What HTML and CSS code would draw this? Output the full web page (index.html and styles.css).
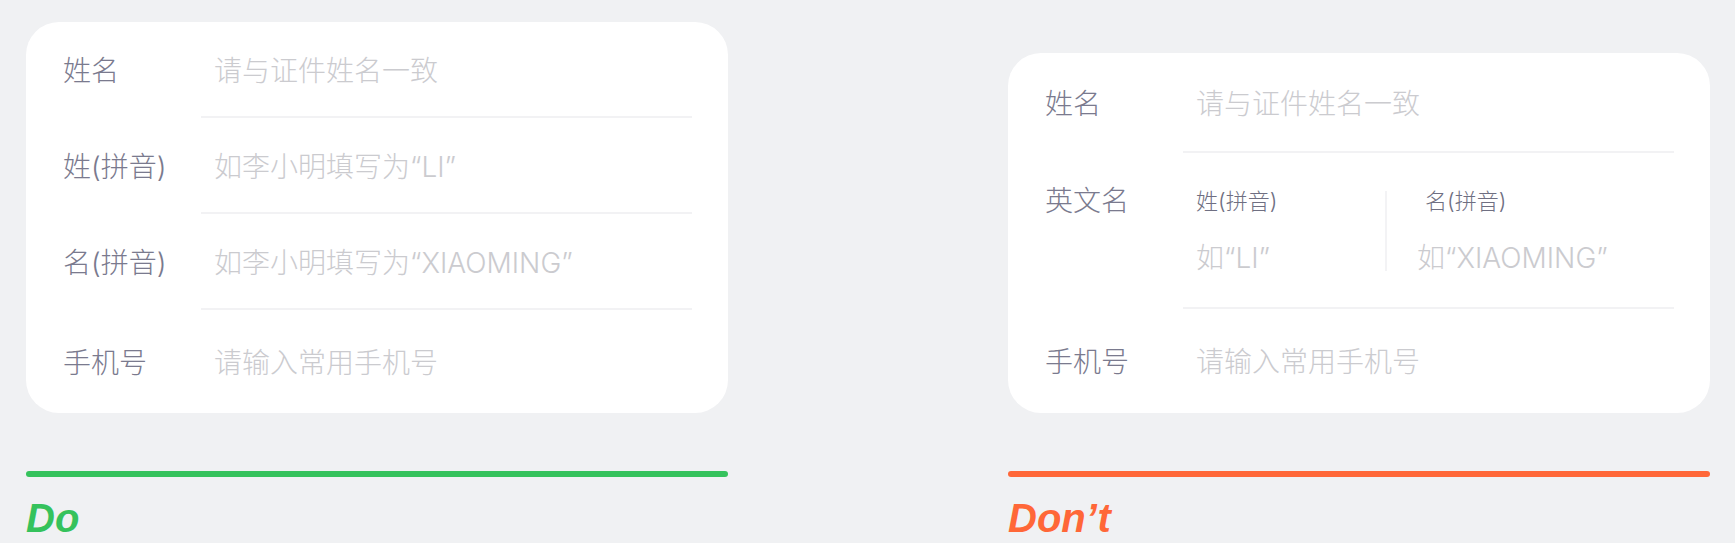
FILE: index.html
```html
<!DOCTYPE html>
<html lang="zh-CN">
<head>
<meta charset="utf-8">
<title>表单示例 Do / Don't</title>
<link rel="stylesheet" href="styles.css">
</head>
<body>
<div class="page">
  <section class="col">
    <div class="card">
      <div class="row">
        <div class="label">姓名</div>
        <div class="field"><span class="ph">请与证件姓名一致</span></div>
      </div>
      <div class="row">
        <div class="label">姓(拼音)</div>
        <div class="field"><span class="ph">如李小明填写为“LI”</span></div>
      </div>
      <div class="row">
        <div class="label">名(拼音)</div>
        <div class="field"><span class="ph">如李小明填写为“XIAOMING”</span></div>
      </div>
      <div class="row row-last">
        <div class="label">手机号</div>
        <div class="field"><span class="ph">请输入常用手机号</span></div>
      </div>
    </div>
    <div class="bar bar-do"></div>
    <div class="verdict verdict-do">Do</div>
  </section>

  <section class="col">
    <div class="card card-dont">
      <div class="row">
        <div class="label">姓名</div>
        <div class="field"><span class="ph">请与证件姓名一致</span></div>
      </div>
      <div class="row row-en">
        <div class="label">英文名</div>
        <div class="field">
          <div class="subcols">
            <div class="subcol">
              <div class="sublabel">姓(拼音)</div>
              <div class="ph subph">如“LI”</div>
            </div>
            <div class="subcol subcol-second">
              <div class="sublabel sublabel-indent">名(拼音)</div>
              <div class="ph subph">如“XIAOMING”</div>
            </div>
          </div>
        </div>
      </div>
      <div class="row row-last">
        <div class="label">手机号</div>
        <div class="field"><span class="ph">请输入常用手机号</span></div>
      </div>
    </div>
    <div class="bar bar-dont"></div>
    <div class="verdict verdict-dont">Don’t</div>
  </section>
</div>
</body>
</html>
```

FILE: styles.css
```css
html, body {
  margin: 0;
  padding: 0;
  background: #f0f1f3;
}

body {
  font-family: "Inter", "Noto Sans CJK SC", sans-serif;
  font-weight: 300;
  overflow: hidden;
}

.page {
  display: flex;
  align-items: flex-end;
  gap: 280px;
  padding: 22px 0 0 26px;
}

.col {
  width: 702px;
  display: flex;
  flex-direction: column;
}

.card {
  background: #ffffff;
  border-radius: 33px;
  padding: 0 36px 0 37px;
}

.row {
  display: flex;
  align-items: flex-start;
}

.label {
  width: 138px;
  flex: none;
  font-size: 28px;
  line-height: 36px;
  height: 36px;
  box-sizing: content-box;
  color: #7a7a8e;
  padding-top: 31px;
  white-space: nowrap;
}

.field {
  flex: 1;
  font-size: 28px;
  line-height: 36px;
  padding: 31px 0 27px 13px;
  border-bottom: 2px solid #f2f2f4;
}

.ph {
  font-size: 28px;
  color: #cbcbcf;
  white-space: nowrap;
}

.row-last .label {
  padding-top: 35px;
}

.row-last .field {
  padding-top: 35px;
  padding-bottom: 32px;
  border-bottom: none;
}

.card-dont .row .label {
  padding-top: 33px;
}

.card-dont .row .field {
  padding-top: 33px;
  padding-bottom: 29px;
}

.card-dont .row-last .label {
  padding-top: 35px;
}

.card-dont .row-last .field {
  padding-top: 35px;
  padding-bottom: 33px;
}

.card-dont .row-en .label {
  padding-top: 30px;
}

.card-dont .row-en .field {
  padding-top: 38px;
  padding-bottom: 36px;
}

.subcols {
  display: flex;
}

.subcol {
  display: flex;
  flex-direction: column;
  width: 189px;
}

.subcol-second {
  width: auto;
  flex: 1;
  border-left: 2px solid #f3f3f5;
  padding-left: 30px;
}

.sublabel {
  font-size: 22px;
  line-height: 20px;
  height: 20px;
  color: #6f6f82;
  white-space: nowrap;
}

.sublabel-indent {
  padding-left: 8px;
}

.subph {
  margin-top: 34px;
  line-height: 26px;
  height: 26px;
}

.bar {
  margin-top: 58px;
  height: 6px;
  border-radius: 3px;
}

.bar-do {
  background: #35c25c;
}

.bar-dont {
  background: #ff6738;
}

.verdict {
  margin-top: 18px;
  font-family: "Liberation Sans", Arial, sans-serif;
  font-weight: 700;
  font-style: italic;
  font-size: 40px;
  line-height: 46px;
}

.verdict-do {
  color: #35c25c;
}

.verdict-dont {
  color: #ff6738;
}
```
